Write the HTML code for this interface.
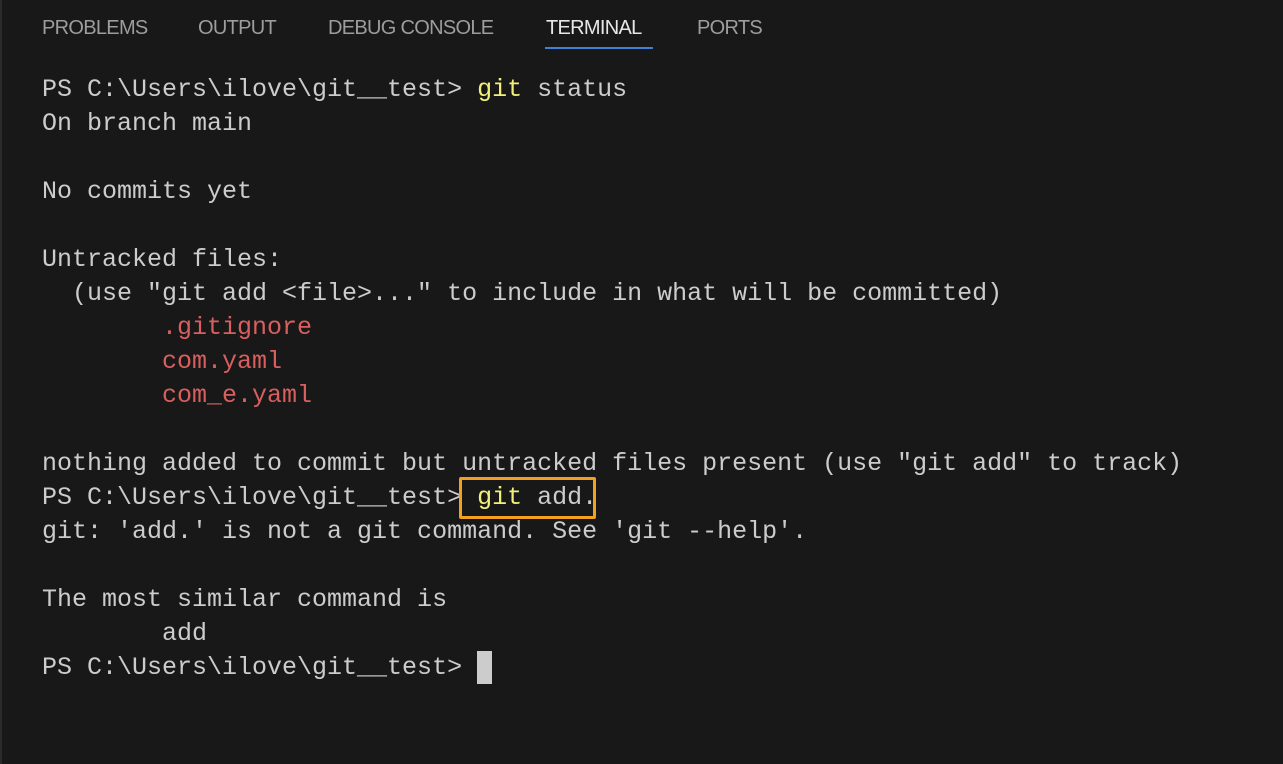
<!DOCTYPE html>
<html><head><meta charset="utf-8"><style>
html,body{margin:0;padding:0;}
body{width:1283px;height:764px;background:#181818;position:relative;overflow:hidden;}
.lb{position:absolute;left:0;top:0;width:2px;height:764px;background:#2b2b2b;}
.tab{position:absolute;top:16px;font-family:"Liberation Sans",sans-serif;font-size:20px;color:#9d9d9d;line-height:24px;letter-spacing:-0.7px;}
.act{color:#e7e7e7;}
.ul{position:absolute;left:545px;top:47px;width:108px;height:2px;background:#3f7fd6;}
pre{position:absolute;left:42px;top:73px;margin:0;font-family:"Liberation Mono",monospace;font-size:25px;line-height:34px;color:#cccccc;}
.y{color:#f0f07a;}
.r{color:#d95f5f;}
.box{position:absolute;left:459px;top:477px;width:131px;height:36px;border:3px solid #f2a01e;border-radius:2px;}
.cur{position:absolute;left:477px;top:651px;width:15px;height:33px;background:#cccccc;}
</style></head><body>
<div class="lb"></div>
<div class="tab" style="left:42px">PROBLEMS</div>
<div class="tab" style="left:198px">OUTPUT</div>
<div class="tab" style="left:328px">DEBUG CONSOLE</div>
<div class="tab act" style="left:546px">TERMINAL</div>
<div class="tab" style="left:697px">PORTS</div>
<div class="ul"></div>
<pre>PS C:\Users\ilove\git__test&gt; <span class="y">git</span> status
On branch main

No commits yet

Untracked files:
  (use "git add &lt;file&gt;..." to include in what will be committed)
        <span class="r">.gitignore</span>
        <span class="r">com.yaml</span>
        <span class="r">com_e.yaml</span>

nothing added to commit but untracked files present (use "git add" to track)
PS C:\Users\ilove\git__test&gt; <span class="y">git</span> add.
git: 'add.' is not a git command. See 'git --help'.

The most similar command is
        add
PS C:\Users\ilove\git__test&gt; </pre>
<div class="box"></div>
<div class="cur"></div>
</body></html>
